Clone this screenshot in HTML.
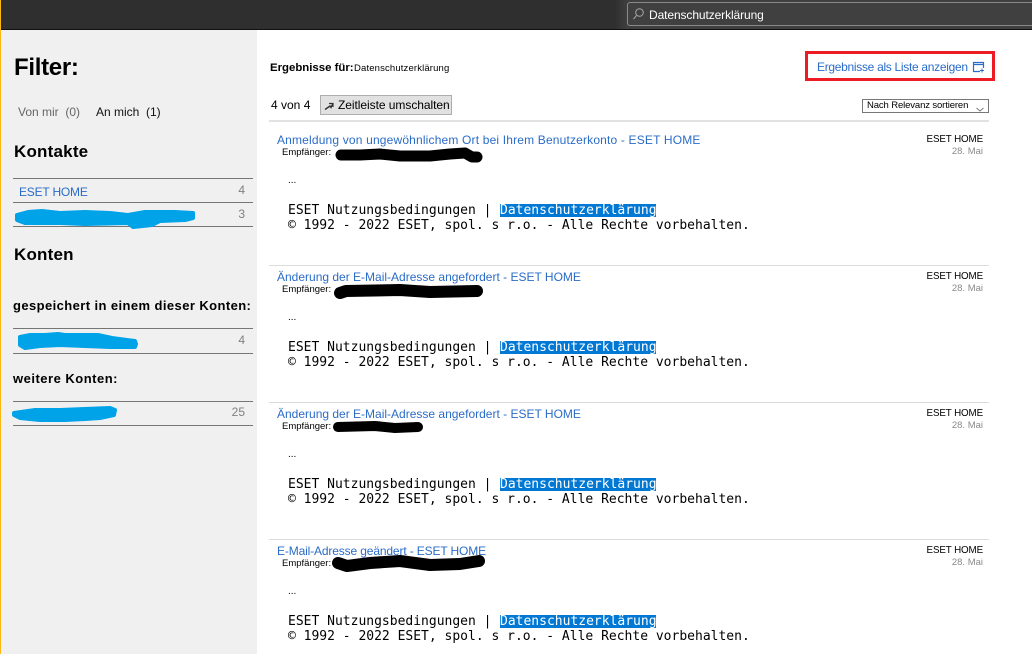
<!DOCTYPE html>
<html lang="de"><head><meta charset="utf-8"><title>Suche</title>
<style>
html,body{margin:0;padding:0;width:1032px;height:654px;overflow:hidden;background:#fff}
body{position:relative;font-family:"Liberation Sans",sans-serif;color:#000}
.t{position:absolute;white-space:nowrap;line-height:16px;height:16px}
.b{position:absolute}
.m{font-family:"DejaVu Sans Mono",monospace;font-size:13px;line-height:15px;height:15px}
.k{font-family:"DejaVu Sans Mono",monospace;font-size:13px;line-height:13px;height:13px;background:#0078d4;color:#fff;left:500px;width:156px}
.ln{position:absolute;background:#767676;height:1px;left:13px;width:240px}
.sep{position:absolute;background:#dcdcdc;height:1px;left:269px;width:720px}
.ti{color:#2a6cc8;font-size:12px}
.em{font-size:9.5px;color:#000}
.ac{font-size:9.8px;right:49px;letter-spacing:-.12px}
.dt{font-size:9.5px;color:#8a8a8a;right:49px}
.ct{font-size:12px;color:#808080;right:787px}
svg{position:absolute;left:0;top:0}
</style></head><body>
<div class="b" style="left:0;top:0;width:1032px;height:29px;background:#2f2f2f"></div>
<div class="b" style="left:615px;top:0;width:417px;height:29px;background:linear-gradient(90deg,#2f2f2f,#3f3f3f 12px)"></div>
<div class="b" style="left:0;top:29px;width:1032px;height:1px;background:#111"></div>
<div class="b" style="left:627px;top:2px;width:420px;height:22px;border:1px solid #8a8a8a;border-radius:3px;background:#404040"></div>
<div class="t" style="left:649px;top:7px;font-size:12px;color:#fff;letter-spacing:-.1px">Datenschutzerklärung</div>
<div class="b" style="left:0;top:30px;width:257px;height:624px;background:#f0f0f0"></div>
<div class="b" style="left:0;top:0;width:1px;height:654px;background:#fdb913"></div>

<div class="t" style="left:14px;top:56px;font-size:24px;line-height:24px;height:24px;font-weight:bold;letter-spacing:-.3px">Filter:</div>
<div class="t" style="left:18px;top:104px;font-size:12px;color:#666">Von mir&nbsp; (0)</div>
<div class="t" style="left:96px;top:104px;font-size:12px;color:#111">An mich&nbsp; (1)</div>
<div class="t" style="left:14px;top:142px;font-size:17px;line-height:20px;height:20px;font-weight:bold;letter-spacing:.2px">Kontakte</div>
<div class="ln" style="top:178px"></div><div class="ln" style="top:202px"></div><div class="ln" style="top:226px"></div>
<div class="t" style="left:19px;top:184px;font-size:12px;color:#2a6cc8;letter-spacing:-.2px">ESET HOME</div>
<div class="t ct" style="top:182px">4</div><div class="t ct" style="top:206px">3</div>
<div class="t" style="left:14px;top:245px;font-size:17px;line-height:20px;height:20px;font-weight:bold;letter-spacing:.2px">Konten</div>
<div class="t" style="left:13px;top:298px;font-size:13px;font-weight:bold;letter-spacing:.41px">gespeichert in einem dieser Konten:</div>
<div class="ln" style="top:328px"></div><div class="ln" style="top:353px"></div>
<div class="t ct" style="top:332px">4</div>
<div class="t" style="left:13px;top:371px;font-size:13px;font-weight:bold;letter-spacing:.5px">weitere Konten:</div>
<div class="ln" style="top:401px"></div><div class="ln" style="top:425px"></div>
<div class="t ct" style="top:404px">25</div>

<div class="t" style="left:270px;top:60px;font-size:11.4px;font-weight:bold">Ergebnisse für:</div>
<div class="t" style="left:354px;top:61px;font-size:9.5px;letter-spacing:.15px">Datenschutzerklärung</div>
<div class="b" style="left:805px;top:51px;width:184px;height:24px;border:3px solid #ed1c24"></div>
<div class="t" style="left:817px;top:59px;font-size:12px;color:#2a6cc8;letter-spacing:-.3px">Ergebnisse als Liste anzeigen</div>
<div class="t" style="left:271px;top:97px;font-size:12px">4 von 4</div>
<div class="b" style="left:320px;top:95px;width:130px;height:18px;background:#e1e1e1;border:1px solid #adadad"></div>
<div class="t" style="left:338px;top:97px;font-size:12px;letter-spacing:-.05px">Zeitleiste umschalten</div>
<div class="b" style="left:862px;top:99px;width:125px;height:12px;border:1px solid #777"></div>
<div class="t" style="left:867px;top:98px;font-size:9.5px;letter-spacing:-.12px">Nach Relevanz sortieren</div>
<div class="b" style="left:269px;top:120px;width:720px;height:2px;background:#e2e2e2"></div>

<div class="t ti" style="left:277px;top:132px;letter-spacing:.17px">Anmeldung von ungewöhnlichem Ort bei Ihrem Benutzerkonto - ESET HOME</div>
<div class="t em" style="left:282px;top:145px">Empfänger:</div>
<div class="t ac" style="top:132px">ESET HOME</div><div class="t dt" style="top:144px">28. Mai</div>
<div class="t" style="left:288px;top:173px;font-size:10px">...</div>
<div class="t m" style="left:288px;top:203px">ESET Nutzungsbedingungen |</div>
<div class="t k" style="top:204px">Datenschutzerklärung</div>
<div class="t m" style="left:288px;top:218px">© 1992 - 2022 ESET, spol. s r.o. - Alle Rechte vorbehalten.</div>

<div class="sep" style="top:265px"></div>
<div class="t ti" style="left:277px;top:269px">Änderung der E-Mail-Adresse angefordert - ESET HOME</div>
<div class="t em" style="left:282px;top:282px">Empfänger:</div>
<div class="t ac" style="top:269px">ESET HOME</div><div class="t dt" style="top:281px">28. Mai</div>
<div class="t" style="left:288px;top:310px;font-size:10px">...</div>
<div class="t m" style="left:288px;top:340px">ESET Nutzungsbedingungen |</div>
<div class="t k" style="top:341px">Datenschutzerklärung</div>
<div class="t m" style="left:288px;top:355px">© 1992 - 2022 ESET, spol. s r.o. - Alle Rechte vorbehalten.</div>

<div class="sep" style="top:402px"></div>
<div class="t ti" style="left:277px;top:406px">Änderung der E-Mail-Adresse angefordert - ESET HOME</div>
<div class="t em" style="left:282px;top:419px">Empfänger:</div>
<div class="t ac" style="top:406px">ESET HOME</div><div class="t dt" style="top:418px">28. Mai</div>
<div class="t" style="left:288px;top:447px;font-size:10px">...</div>
<div class="t m" style="left:288px;top:477px">ESET Nutzungsbedingungen |</div>
<div class="t k" style="top:478px">Datenschutzerklärung</div>
<div class="t m" style="left:288px;top:492px">© 1992 - 2022 ESET, spol. s r.o. - Alle Rechte vorbehalten.</div>

<div class="sep" style="top:539px"></div>
<div class="t ti" style="left:277px;top:543px;letter-spacing:-.14px">E-Mail-Adresse geändert - ESET HOME</div>
<div class="t em" style="left:282px;top:556px">Empfänger:</div>
<div class="t ac" style="top:543px">ESET HOME</div><div class="t dt" style="top:555px">28. Mai</div>
<div class="t" style="left:288px;top:584px;font-size:10px">...</div>
<div class="t m" style="left:288px;top:614px">ESET Nutzungsbedingungen |</div>
<div class="t k" style="top:615px">Datenschutzerklärung</div>
<div class="t m" style="left:288px;top:629px">© 1992 - 2022 ESET, spol. s r.o. - Alle Rechte vorbehalten.</div>

<svg width="1032" height="654" viewBox="0 0 1032 654" fill="none">
<circle cx="639.5" cy="12.5" r="3.8" stroke="#a8a8a8" stroke-width="1"/><path d="M636.6 15.4L633.5 19" stroke="#a8a8a8"/>
<path d="M325 109.5L330 106L331 107.5L333 103.5" stroke="#333" stroke-width="1.4"/><path d="M329 103.5H333V107" stroke="#333" stroke-width="1.2"/>
<path d="M980 71.5H973.5V62.5H983.5V68M973.5 64.5H983.5" stroke="#2a6cc8" stroke-width="1.2"/><path d="M980 70.5H984M982 68.5V72.5" stroke="#2a6cc8"/>
<path d="M976.5 108L980 111L983.5 108" stroke="#777"/>
<g fill="#00a2e8" stroke="#00a2e8" stroke-width="4" stroke-linejoin="round">
<path d="M17 215L28 212L42 211L60 213L85 212L110 213L128 215L145 212L175 212L193 213L193 218L185 220L160 221L152 225L133 227L128 223L85 224L60 223L25 223L17 220Z"/>
<path d="M20 337L30 335L45 335L58 334L65 335L85 335L98 335L112 338L135 341L136 344L135 347L110 347L85 346L60 345L40 346L25 348L20 345Z"/>
<path d="M14 413L35 410L60 410L85 409L110 408L115 410L114 415L100 418L85 419L65 420L40 420L20 418L14 415Z"/>
</g>
<g stroke="#000" stroke-linecap="round" stroke-linejoin="round">
<path d="M341 155L360 155L380 154L400 156L430 156L450 154L465 153L472 157L477 157" stroke-width="11"/>
<path d="M340 293L346 291L400 290L430 292L477 291" stroke-width="12"/>
<path d="M338 427L375 426L395 428L418 427" stroke-width="10"/>
<path d="M338 563L347 566L370 563L400 561L430 565L460 564L479 561" stroke-width="12"/>
</g>
</svg>
</body></html>
